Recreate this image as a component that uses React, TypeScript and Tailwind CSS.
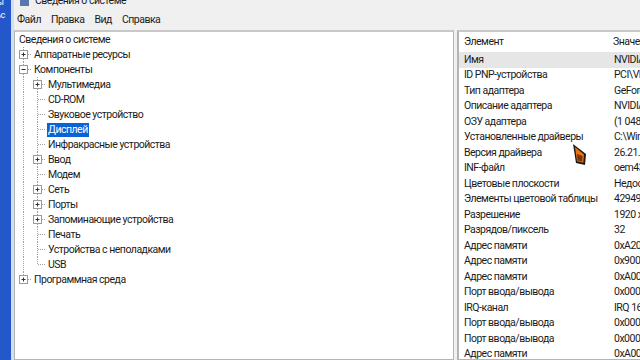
import React from 'react';

type Node = { label: string; level: 1 | 2; box?: 'plus' | 'minus'; last?: boolean; selected?: boolean };

const tree: Node[] = [
  { label: 'Аппаратные ресурсы', level: 1, box: 'plus' },
  { label: 'Компоненты', level: 1, box: 'minus' },
  { label: 'Мультимедиа', level: 2, box: 'plus' },
  { label: 'CD-ROM', level: 2 },
  { label: 'Звуковое устройство', level: 2 },
  { label: 'Дисплей', level: 2, selected: true },
  { label: 'Инфракрасные устройства', level: 2 },
  { label: 'Ввод', level: 2, box: 'plus' },
  { label: 'Модем', level: 2 },
  { label: 'Сеть', level: 2, box: 'plus' },
  { label: 'Порты', level: 2, box: 'plus' },
  { label: 'Запоминающие устройства', level: 2, box: 'plus' },
  { label: 'Печать', level: 2 },
  { label: 'Устройства с неполадками', level: 2 },
  { label: 'USB', level: 2, last: true },
  { label: 'Программная среда', level: 1, box: 'plus', last: true },
];

const rows: [string, string][] = [
  ['Имя', 'NVIDIA GeForce'],
  ['ID PNP-устройства', 'PCI\\VEN_10DE'],
  ['Тип адаптера', 'GeForce GTX'],
  ['Описание адаптера', 'NVIDIA GeForce'],
  ['ОЗУ адаптера', '(1 048 576)'],
  ['Установленные драйверы', 'C:\\Windows'],
  ['Версия драйвера', '26.21.14'],
  ['INF-файл', 'oem43.inf'],
  ['Цветовые плоскости', 'Недоступно'],
  ['Элементы цветовой таблицы', '4294967296'],
  ['Разрешение', '1920 x 1080'],
  ['Разрядов/пиксель', '32'],
  ['Адрес памяти', '0xA2000000'],
  ['Адрес памяти', '0x90000000'],
  ['Адрес памяти', '0xA0000000'],
  ['Порт ввода/вывода', '0x00003000'],
  ['IRQ-канал', 'IRQ 16'],
  ['Порт ввода/вывода', '0x000003B0'],
  ['Порт ввода/вывода', '0x000003C0'],
  ['Адрес памяти', '0xA0000000'],
];

function Guide({ box, last }: { box?: 'plus' | 'minus'; last?: boolean }) {
  return (
    <svg width="14" height="15" viewBox="0 0 14 15" className="shrink-0">
      <line x1="4.5" y1="0" x2="4.5" y2={last ? 7.5 : 15} stroke="#a0a0a0" strokeDasharray="1 1" />
      <line x1="5" y1="7.5" x2="13" y2="7.5" stroke="#a0a0a0" strokeDasharray="1 1" />
      {box && (
        <>
          <rect x="0.5" y="3.5" width="8" height="8" fill="#fff" stroke="#9a9a9a" />
          <line x1="2.5" y1="7.5" x2="6.5" y2="7.5" stroke="#333" />
          {box === 'plus' && <line x1="4.5" y1="5.5" x2="4.5" y2="9.5" stroke="#333" />}
        </>
      )}
    </svg>
  );
}

export default function App() {
  return (
    <div className="w-[640px] h-[360px] overflow-hidden flex bg-[#f0f0f0] text-[10.5px] tracking-[-0.5px] text-[#1b1b1b]" style={{ fontFamily: 'Roboto, "Noto Sans", sans-serif' }}>
      {/* desktop strip */}
      <div className="w-[11px] shrink-0 bg-[#2457c9] text-white text-[9px] leading-[13px] overflow-hidden">
        <div className="-ml-[3px] -mt-[4px]">ы</div>
        <div className="-ml-[4px]">ьс</div>
      </div>
      <div className="w-[3px] shrink-0 bg-[#cfe0f5]" />

      <div className="flex-1 flex flex-col min-w-0">
        {/* title */}
        <div className="h-[10px] flex items-start gap-[6px] pl-[6px] overflow-hidden">
          <div className="w-[9px] h-[7px] bg-[#5a78b0] -mt-[1px]" />
          <div className="-mt-[7px] leading-[16px] whitespace-nowrap">Сведения о системе</div>
        </div>
        {/* menu */}
        <div className="h-[20px] flex items-center gap-[10px] pl-[3px]">
          <span>Файл</span>
          <span>Правка</span>
          <span>Вид</span>
          <span>Справка</span>
        </div>

        <div className="flex-1 flex gap-[3px] min-h-0">
          {/* tree pane */}
          <div className="w-[440px] shrink-0 bg-white border border-[#b4b4b4] border-t-2 border-t-[#c8c8c8] pl-[4px]">
            <div className="h-[15px] leading-[15px] whitespace-nowrap">Сведения о системе</div>
            {tree.map((n, i) => (
              <div key={i} className="h-[15px] flex items-center whitespace-nowrap">
                {n.level === 2 && (
                  <svg width="14" height="15" viewBox="0 0 14 15" className="shrink-0">
                    <line x1="4.5" y1="0" x2="4.5" y2="15" stroke="#a0a0a0" strokeDasharray="1 1" />
                  </svg>
                )}
                <Guide box={n.box} last={n.last} />
                <span className={`leading-[14px] px-[1px] ${n.selected ? 'bg-[#0a62d4] text-white' : ''}`}>{n.label}</span>
              </div>
            ))}
          </div>

          {/* details pane */}
          <div className="flex-1 relative bg-white border-l-2 border-y border-[#b4b4b4] border-t-2 border-t-[#c8c8c8] pt-[3px] overflow-hidden">
            <div className="h-[17px] pb-[4px] flex items-center whitespace-nowrap">
              <span className="w-[149px] shrink-0 pl-[5px]">Элемент</span>
              <span className="pl-[5px]">Значение</span>
            </div>
            {rows.map(([k, v], i) => (
              <div key={i} className={`h-[15.5px] flex items-center whitespace-nowrap ${i === 0 ? 'bg-[#e6e6e6]' : ''}`}>
                <span className="w-[149px] shrink-0 pl-[5px]">{k}</span>
                <span className="pl-[6px]">{v}</span>
              </div>
            ))}
            {/* mouse cursor */}
            <svg width="16" height="24" viewBox="0 0 16 24" className="absolute left-[113px] top-[111px]">
              <polygon points="1,1 14,11 13,22 4,20" fill="#1a1a1a" />
              <polygon points="3,4 12,11.5 11.3,19.8 5,18.3" fill="#e8730f" />
              <polygon points="5,11 10.5,13 10,18.5 5.6,17.4" fill="#7a3305" />
            </svg>
          </div>
        </div>
      </div>
    </div>
  );
}
